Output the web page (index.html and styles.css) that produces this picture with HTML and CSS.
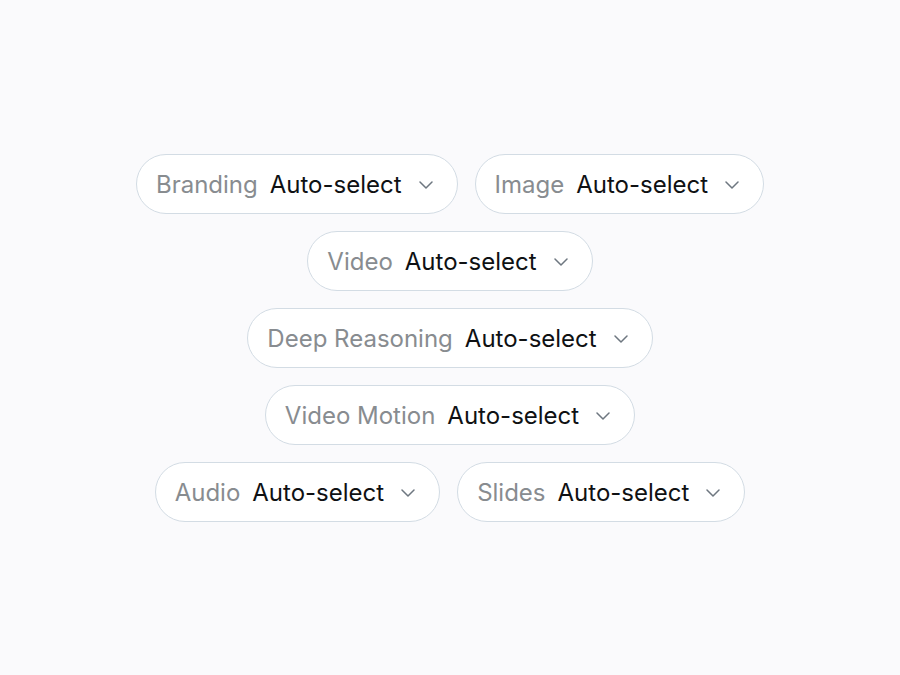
FILE: index.html
```html
<!DOCTYPE html>
<html>
<head>
<meta charset="utf-8">
<link rel="stylesheet" href="styles.css">
</head>
<body>
<main class="stage">
  <div class="row">
    <button class="pill"><span class="label">Branding</span><span class="value">Auto-select</span><svg class="chev" viewBox="0 0 14 8"><path d="M1 1l6 6 6-6"/></svg></button>
    <button class="pill"><span class="label">Image</span><span class="value">Auto-select</span><svg class="chev" viewBox="0 0 14 8"><path d="M1 1l6 6 6-6"/></svg></button>
  </div>
  <div class="row">
    <button class="pill"><span class="label">Video</span><span class="value">Auto-select</span><svg class="chev" viewBox="0 0 14 8"><path d="M1 1l6 6 6-6"/></svg></button>
  </div>
  <div class="row">
    <button class="pill"><span class="label">Deep Reasoning</span><span class="value">Auto-select</span><svg class="chev" viewBox="0 0 14 8"><path d="M1 1l6 6 6-6"/></svg></button>
  </div>
  <div class="row">
    <button class="pill"><span class="label">Video Motion</span><span class="value">Auto-select</span><svg class="chev" viewBox="0 0 14 8"><path d="M1 1l6 6 6-6"/></svg></button>
  </div>
  <div class="row">
    <button class="pill"><span class="label">Audio</span><span class="value">Auto-select</span><svg class="chev" viewBox="0 0 14 8"><path d="M1 1l6 6 6-6"/></svg></button>
    <button class="pill"><span class="label">Slides</span><span class="value">Auto-select</span><svg class="chev" viewBox="0 0 14 8"><path d="M1 1l6 6 6-6"/></svg></button>
  </div>
</main>
</body>
</html>
```

FILE: styles.css
```css
html, body {
  margin: 0;
  padding: 0;
  background: #fafafc;
}
body {
  font-family: Inter, "Liberation Sans", sans-serif;
}
.stage {
  height: 675px;
  display: flex;
  flex-direction: column;
  justify-content: center;
  align-items: center;
  gap: 17px;
}
.row {
  display: flex;
  justify-content: center;
  gap: 17px;
}
.pill {
  box-sizing: border-box;
  height: 60px;
  display: flex;
  align-items: center;
  padding: 2px 24px 0 19px;
  background: #ffffff;
  border: 1.5px solid #d3dce4;
  border-radius: 30px;
  font-family: inherit;
  font-size: 24px;
  cursor: pointer;
}
.label {
  color: #888c90;
  margin-right: 12px;
}
.value {
  color: #0f1113;
  font-weight: 400;
}
.chev {
  width: 14px;
  height: 8px;
  margin-left: 17px;
  fill: none;
  stroke: #6e7780;
  stroke-width: 1.5;
  stroke-linecap: round;
  stroke-linejoin: round;
}
```
